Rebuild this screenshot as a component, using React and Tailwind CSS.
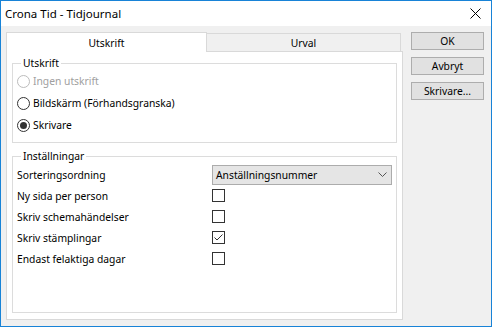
import React from "react";

const font = { fontFamily: '"Noto Sans", "Segoe UI", sans-serif' };

function Radio({ checked, disabled, label }) {
    return (
        <div className="flex items-center h-[22px] pl-[4px]">
            <span
                className={`w-[13px] h-[13px] rounded-full border bg-white flex items-center justify-center ${
                    disabled ? "border-[#bcbcbc]" : "border-[#333333]"
                }`}
            >
                {checked && <span className="w-[7px] h-[7px] rounded-full bg-[#333333]" />}
            </span>
            <span className={`ml-[3px] ${disabled ? "text-[#a0a0a0]" : "text-black"}`}>{label}</span>
        </div>
    );
}

function Checkbox({ checked }) {
    return (
        <span className="w-[13px] h-[13px] border border-[#333333] bg-white flex items-center justify-center">
            {checked && (
                <svg width="11" height="11" viewBox="0 0 11 11">
                    <path d="M1.5 5.5 L4 8 L9.5 2.5" fill="none" stroke="#333333" strokeWidth="1" />
                </svg>
            )}
        </span>
    );
}

function Row({ label, children }) {
    return (
        <div className="flex items-center h-[21px] pl-[4px]">
            <span className="w-[195px]">{label}</span>
            {children}
        </div>
    );
}

export default function App() {
    return (
        <div
            className="w-[492px] h-[327px] border border-[#1883d7] bg-[#f0f0f0] flex flex-col text-[10.3px] leading-[16px] text-black"
            style={font}
        >
            <div className="h-[25px] bg-white flex items-center justify-between pl-[4px] pr-[10px]">
                <span className="text-[11.5px]">Crona Tid - Tidjournal</span>
                <svg width="11" height="11" viewBox="0 0 11 11">
                    <path d="M0.5 0.5 L10.5 10.5 M10.5 0.5 L0.5 10.5" stroke="#000" strokeWidth="1" />
                </svg>
            </div>

            <div className="flex flex-1 pl-[5px] pt-[5px]">
                <div className="w-[397px] flex flex-col">
                    <div className="flex h-[20px] items-end">
                        <div className="w-[201px] h-[20px] bg-white border border-b-0 border-[#d9d9d9] flex items-center justify-center relative top-[1px] z-10">
                            Utskrift
                        </div>
                        <div className="w-[194px] h-[18px] bg-[#f0f0f0] border border-l-0 border-b-0 border-[#d9d9d9] flex items-center justify-center">
                            Urval
                        </div>
                    </div>
                    <div className="h-[269px] bg-white border border-[#d9d9d9] px-[5px] pt-[3px]">
                        <fieldset className="h-[88px] border border-[#dcdcdc]">
                            <legend className="ml-[8px] px-[2px]">Utskrift</legend>
                            <div className="-mt-[1px]">
                                <Radio disabled label="Ingen utskrift" />
                                <Radio label="Bildskärm (Förhandsgranska)" />
                                <Radio checked label="Skrivare" />
                            </div>
                        </fieldset>
                        <fieldset className="h-[165px] mt-[5px] border border-[#dcdcdc]">
                            <legend className="ml-[8px] px-[2px]">Inställningar</legend>
                            <Row label="Sorteringsordning">
                                <div className="w-[180px] h-[20px] bg-[#e5e5e5] border border-[#acacac] flex items-center justify-between pl-[3px] pr-[4px]">
                                    <span>Anställningsnummer</span>
                                    <svg width="9" height="6" viewBox="0 0 9 6">
                                        <path d="M0.5 0.5 L4.5 4.5 L8.5 0.5" fill="none" stroke="#555" strokeWidth="1" />
                                    </svg>
                                </div>
                            </Row>
                            <Row label="Ny sida per person">
                                <Checkbox />
                            </Row>
                            <Row label="Skriv schemahändelser">
                                <Checkbox />
                            </Row>
                            <Row label="Skriv stämplingar">
                                <Checkbox checked />
                            </Row>
                            <Row label="Endast felaktiga dagar">
                                <Checkbox />
                            </Row>
                        </fieldset>
                    </div>
                </div>

                <div className="ml-[8px] pt-[1px] flex flex-col gap-[7px]">
                    {["OK", "Avbryt", "Skrivare..."].map((b) => (
                        <button
                            key={b}
                            className="w-[73px] h-[18px] bg-[#e1e1e1] border border-[#adadad] flex items-center justify-center leading-none"
                        >
                            {b}
                        </button>
                    ))}
                </div>
            </div>
        </div>
    );
}
